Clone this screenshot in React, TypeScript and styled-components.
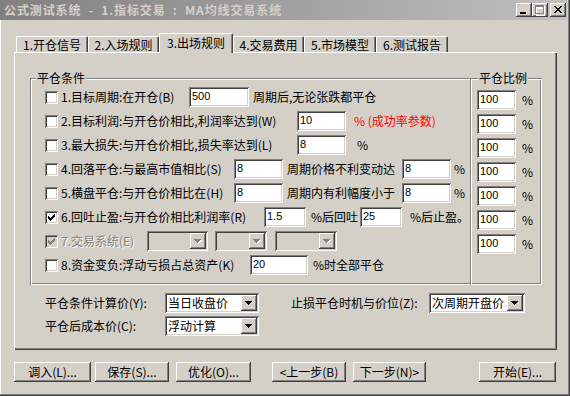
import React from 'react'
import styled, { createGlobalStyle, css } from 'styled-components'

const face = '#d4d0c8'
const shadow = '#808080'
const dark = '#404040'
const light = '#ffffff'
const uiFont = `"Noto Sans CJK SC", "Noto Sans", "Liberation Sans", sans-serif`
const editFont = `"Liberation Sans", "Noto Sans CJK SC", sans-serif`

const GlobalStyle = createGlobalStyle`
  html, body {
    margin: 0;
    padding: 0;
    background: ${face};
  }
  body {
    font-family: ${uiFont};
    font-size: 12px;
    line-height: 14px;
    color: #000;
  }
`

const sunken = css`
  box-shadow:
    inset 1px 1px ${shadow},
    inset -1px -1px ${light},
    inset 2px 2px ${dark},
    inset -2px -2px ${face};
`

const raised = css`
  box-shadow:
    inset -1px -1px ${dark},
    inset 1px 1px ${light},
    inset -2px -2px ${shadow},
    inset 2px 2px ${face};
`

const etched = css`
  box-shadow:
    inset 1px 1px ${shadow},
    inset 2px 2px ${light},
    inset -1px -1px ${light},
    inset -2px -2px ${shadow};
`

const etchedOpenRight = css`
  box-shadow:
    inset 1px 1px ${shadow},
    inset 2px 2px ${light},
    inset 0 -1px ${light},
    inset 0 -2px ${shadow};
`

const Window = styled.div`
  width: 570px;
  height: 396px;
  box-sizing: border-box;
  background: ${face};
  display: flex;
  flex-direction: column;
  overflow: hidden;
  box-shadow: inset -1px -1px ${dark}, inset -2px -2px ${shadow}, inset 1px 0 ${light};
`

const TitleBar = styled.div`
  height: 20px;
  margin-right: 3px;
  padding: 0 1px 0 4px;
  display: flex;
  align-items: center;
  background: linear-gradient(90deg, #808080, #c0c0c0);
`

const TitleText = styled.span`
  font-weight: bold;
  color: ${face};
  white-space: pre;
  letter-spacing: 0.9px;
`

const CaptionButtons = styled.div`
  margin-left: auto;
  display: flex;
`

const CaptionButton = styled.span<{ $gap?: number }>`
  width: 16px;
  height: 14px;
  margin-left: ${p => p.$gap ?? 0}px;
  background: ${face};
  ${raised}
  svg {
    display: block;
  }
`

const Content = styled.div`
  padding: 13px 0 0 14px;
`

const TabStrip = styled.div`
  display: flex;
  align-items: flex-end;
  height: 19px;
  padding-left: 2px;
`

const Tab = styled.div<{ $w: number; $active?: boolean }>`
  position: relative;
  z-index: ${p => (p.$active ? 1 : 0)};
  box-sizing: border-box;
  width: ${p => p.$w}px;
  height: ${p => (p.$active ? 20 : 16)}px;
  margin-bottom: ${p => (p.$active ? -1 : 0)}px;
  padding-bottom: ${p => (p.$active ? 2 : 0)}px;
  background: ${face};
  border-top: 1px solid ${light};
  border-left: 1px solid ${light};
  border-right: 1px solid ${dark};
  border-radius: 2px 2px 0 0;
  box-shadow: inset -1px 0 ${shadow};
  display: flex;
  align-items: center;
  justify-content: center;
  white-space: nowrap;
`

const Panel = styled.div`
  box-sizing: border-box;
  width: 543px;
  height: 298px;
  padding: 26px 0 0 16px;
  box-shadow: inset 1px 1px ${light}, inset -1px -1px ${dark}, inset -2px -2px ${shadow};
`

const GroupRow = styled.div`
  display: flex;
`

const Group = styled.div<{ $w: number; $openRight?: boolean; $pad: string }>`
  position: relative;
  box-sizing: border-box;
  width: ${p => p.$w}px;
  height: 207px;
  padding: ${p => p.$pad};
  ${p => (p.$openRight ? etchedOpenRight : etched)}
`

const Legend = styled.span<{ $x: number }>`
  position: absolute;
  top: -7px;
  left: ${p => p.$x}px;
  padding: 0 1px;
  background: ${face};
`

const Row = styled.div`
  display: flex;
  align-items: center;
  height: 24px;
`

const Check = styled.span<{ $disabled?: boolean }>`
  flex-shrink: 0;
  width: 13px;
  height: 13px;
  margin-right: 3px;
  box-sizing: border-box;
  background: ${p => (p.$disabled ? face : '#fff')};
  ${sunken}
  display: flex;
  align-items: center;
  justify-content: center;
`

const Text = styled.span<{ $w?: number; $ml?: number; $tone?: 'red' | 'disabled' }>`
  flex-shrink: 0;
  width: ${p => (p.$w ? `${p.$w}px` : 'auto')};
  margin-left: ${p => p.$ml ?? 0}px;
  white-space: nowrap;
  color: ${p => (p.$tone === 'red' ? '#ff0000' : p.$tone === 'disabled' ? shadow : '#000')};
  text-shadow: ${p => (p.$tone === 'disabled' ? `1px 1px ${light}` : 'none')};
`

const Edit = styled.input<{ $w: number; $ml?: number }>`
  flex-shrink: 0;
  width: ${p => p.$w}px;
  height: 20px;
  box-sizing: border-box;
  margin: 0 0 0 ${p => p.$ml ?? 0}px;
  padding: 0 0 2px 3px;
  border: none;
  outline: none;
  background: #fff;
  ${sunken}
  font-family: ${editFont};
  font-size: 11px;
  color: #000;
`

const Combo = styled.div<{ $w: number; $ml?: number; $disabled?: boolean }>`
  flex-shrink: 0;
  display: flex;
  align-items: center;
  box-sizing: border-box;
  width: ${p => p.$w}px;
  height: 20px;
  margin-left: ${p => p.$ml ?? 0}px;
  padding: 2px;
  background: ${p => (p.$disabled ? face : '#fff')};
  ${sunken}
`

const ComboValue = styled.span`
  flex: 1;
  min-width: 0;
  padding-left: 1px;
  line-height: 16px;
  white-space: nowrap;
`

const DropButton = styled.span`
  flex-shrink: 0;
  width: 16px;
  height: 16px;
  box-sizing: border-box;
  background: ${face};
  ${raised}
  display: flex;
  align-items: center;
  justify-content: center;
`

const Settings = styled.div`
  display: grid;
  grid-template-columns: 120px 94px 32px 138px 96px;
  grid-auto-rows: 20px;
  row-gap: 3px;
  align-items: center;
  margin: 8px 0 0 15px;
`

const ButtonBar = styled.div`
  display: flex;
  margin-top: 12px;
`

const PushButton = styled.button<{ $w: number; $ml: number }>`
  width: ${p => p.$w}px;
  height: 20px;
  margin: 0 0 0 ${p => p.$ml}px;
  padding: 0;
  border: none;
  background: ${face};
  ${raised}
  font-family: ${uiFont};
  font-size: 12px;
  line-height: 14px;
  color: #000;
  white-space: nowrap;
`

const CheckMark = ({ color }: { color: string }) => (
  <svg width="7" height="7" viewBox="0 0 7 7" shapeRendering="crispEdges">
    <path
      fill={color}
      d="M0 2h1v3H0zM1 3h1v3H1zM2 4h1v3H2zM3 3h1v3H3zM4 2h1v3H4zM5 1h1v3H5zM6 0h1v3H6z"
    />
  </svg>
)

const arrowPath = 'M0 0h7v1H0zM1 1h5v1H1zM2 2h3v1H2zM3 3h1v1H3z'

const Arrow = ({ disabled }: { disabled?: boolean }) => (
  <svg width="8" height="5" viewBox="0 0 8 5" shapeRendering="crispEdges">
    {disabled && <path fill={light} d={arrowPath} transform="translate(1 1)" />}
    <path fill={disabled ? shadow : '#000'} d={arrowPath} />
  </svg>
)

const Select = ({ w, ml, value, disabled }: { w: number; ml?: number; value?: string; disabled?: boolean }) => (
  <Combo $w={w} $ml={ml} $disabled={disabled}>
    <ComboValue>{value}</ComboValue>
    <DropButton>
      <Arrow disabled={disabled} />
    </DropButton>
  </Combo>
)

const ratios = [0, 1, 2, 3, 4, 5, 6]

const App = () => (
  <>
    <GlobalStyle />
    <Window>
      <TitleBar>
        <TitleText>公式测试系统  -  1.指标交易  :  MA均线交易系统</TitleText>
        <CaptionButtons>
          <CaptionButton>
            <svg width="16" height="14" shapeRendering="crispEdges">
              <rect x="4" y="9" width="6" height="2" fill="#000" />
            </svg>
          </CaptionButton>
          <CaptionButton>
            <svg width="16" height="14" shapeRendering="crispEdges">
              <path fill={light} d="M4 3h9v10H4zM5 6h7v6H5z" fillRule="evenodd" />
              <path fill={shadow} d="M3 2h9v9H3zM4 4h7v6H4z" fillRule="evenodd" />
            </svg>
          </CaptionButton>
          <CaptionButton $gap={2}>
            <svg width="16" height="14" shapeRendering="crispEdges">
              <path
                fill="#000"
                transform="translate(4 3)"
                d="M0 0h2v1H0zM6 0h2v1H6zM1 1h2v1H1zM5 1h2v1H5zM2 2h4v1H2zM3 3h2v1H3zM2 4h4v1H2zM1 5h2v1H1zM5 5h2v1H5zM0 6h2v1H0zM6 6h2v1H6z"
              />
            </svg>
          </CaptionButton>
        </CaptionButtons>
      </TitleBar>

      <Content>
        <TabStrip>
          <Tab $w={72}>1.开仓信号</Tab>
          <Tab $w={71}>2.入场规则</Tab>
          <Tab $w={74} $active>3.出场规则</Tab>
          <Tab $w={71}>4.交易费用</Tab>
          <Tab $w={72}>5.市场模型</Tab>
          <Tab $w={72}>6.测试报告</Tab>
        </TabStrip>

        <Panel>
          <GroupRow>
            <Group $w={440} $openRight $pad="7px 0 0 15px">
              <Legend $x={6}>平仓条件</Legend>
              <Row>
                <Check />
                <Text $w={128}>1.目标周期:在开仓(B)</Text>
                <Edit $w={60} defaultValue="500" />
                <Text $ml={4}>周期后,无论张跌都平仓</Text>
              </Row>
              <Row>
                <Check />
                <Text $w={236}>2.目标利润:与开仓价相比,利润率达到(W)</Text>
                <Edit $w={49} defaultValue="10" />
                <Text $ml={8} $tone="red">% (成功率参数)</Text>
              </Row>
              <Row>
                <Check />
                <Text $w={236}>3.最大损失:与开仓价相比,损失率达到(L)</Text>
                <Edit $w={49} defaultValue="8" />
                <Text $ml={11}>%</Text>
              </Row>
              <Row>
                <Check />
                <Text $w={173}>4.回落平仓:与最高市值相比(S)</Text>
                <Edit $w={49} defaultValue="8" />
                <Text $ml={4} $w={115}>周期价格不利变动达</Text>
                <Edit $w={49} defaultValue="8" />
                <Text $ml={3}>%</Text>
              </Row>
              <Row>
                <Check />
                <Text $w={173}>5.横盘平仓:与开仓价相比在(H)</Text>
                <Edit $w={49} defaultValue="8" />
                <Text $ml={4} $w={115}>周期内有利幅度小于</Text>
                <Edit $w={49} defaultValue="8" />
                <Text $ml={3}>%</Text>
              </Row>
              <Row>
                <Check>
                  <CheckMark color="#000" />
                </Check>
                <Text $w={203}>6.回吐止盈:与开仓价相比利润率(R)</Text>
                <Edit $w={42} defaultValue="1.5" />
                <Text $ml={5} $w={49}>%后回吐</Text>
                <Edit $w={42} defaultValue="25" />
                <Text $ml={8}>%后止盈。</Text>
              </Row>
              <Row>
                <Check $disabled>
                  <CheckMark color={shadow} />
                </Check>
                <Text $w={86} $tone="disabled">7.交易系统(E)</Text>
                <Select w={61} disabled />
                <Select w={52} ml={7} disabled />
                <Select w={62} ml={8} disabled />
              </Row>
              <Row>
                <Check />
                <Text $w={189}>8.资金变负:浮动亏损占总资产(K)</Text>
                <Edit $w={58} defaultValue="20" />
                <Text $ml={5}>%时全部平仓</Text>
              </Row>
            </Group>

            <Group $w={72} $pad="10px 0 0 7px">
              <Legend $x={8}>平仓比例</Legend>
              {ratios.map(i => (
                <Row key={i}>
                  <Edit $w={39} defaultValue="100" />
                  <Text $ml={6}>%</Text>
                </Row>
              ))}
            </Group>
          </GroupRow>

          <Settings>
            <Text>平仓条件计算价(Y):</Text>
            <Select w={94} value="当日收盘价" />
            <span />
            <Text>止损平仓时机与价位(Z):</Text>
            <Select w={96} value="次周期开盘价" />
            <Text>平仓后成本价(C):</Text>
            <Select w={94} value="浮动计算" />
          </Settings>
        </Panel>

        <ButtonBar>
          <PushButton $w={77} $ml={0}>调入(L)...</PushButton>
          <PushButton $w={74} $ml={4}>保存(S)...</PushButton>
          <PushButton $w={75} $ml={7}>优化(O)...</PushButton>
          <PushButton $w={74} $ml={21}>&lt;上一步(B)</PushButton>
          <PushButton $w={73} $ml={7}>下一步(N)&gt;</PushButton>
          <PushButton $w={77} $ml={53}>开始(E)...</PushButton>
        </ButtonBar>
      </Content>
    </Window>
  </>
)

export default App
